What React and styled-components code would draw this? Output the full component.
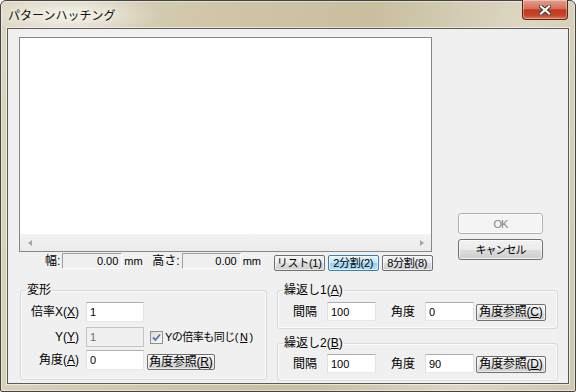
import styled, { createGlobalStyle } from 'styled-components';

const GlobalStyle = createGlobalStyle`
  html, body { margin: 0; padding: 0; background: #fff; }
  body {
    font-family: "Liberation Sans", "Noto Sans CJK JP", sans-serif;
    font-size: 12px;
    line-height: 14px;
    color: #000;
  }
  * { box-sizing: border-box; }
`;

const Window = styled.div`
  width: 576px;
  height: 392px;
  border: 1px solid #434343;
  border-radius: 6px 6px 2px 2px;
  padding: 0 6px 7px 6px;
  display: flex;
  flex-direction: column;
  background:
    radial-gradient(ellipse 90px 22px at 70px 14px, rgba(255,255,255,0.75), rgba(255,255,255,0) 100%),
    linear-gradient(100deg, #dcd5c0 0%, #cfc6a8 35%, #c8bf9f 58%, #ddd6c2 82%, #d0c8ac 100%);
  box-shadow: inset 0 0 0 1px rgba(255,255,255,0.45);
`;

const TitleBar = styled.div`
  height: 27px;
  display: flex;
  align-items: flex-start;
  justify-content: space-between;
`;

const Title = styled.div`
  padding: 6px 0 0 1px;
  font-family: "Noto Sans CJK JP", sans-serif;
  font-size: 12px;
  line-height: 15px;
  color: #111;
  text-shadow: 0 0 6px rgba(255,255,255,0.9);
`;

const CloseButton = styled.div`
  width: 46px;
  height: 20px;
  margin: -1px 1px 0 0;
  border: 1px solid #5b2418;
  border-top: none;
  border-radius: 0 0 4px 4px;
  background: linear-gradient(#e3a08e 0%, #d4705a 45%, #c2391e 52%, #c54428 80%, #d9765c 100%);
  box-shadow: inset 0 0 0 1px rgba(255,255,255,0.35);
  display: flex;
  align-items: center;
  justify-content: center;
`;

const Client = styled.div`
  height: 356px;
  border: 1px solid #5a5a5a;
  background: #f0f0f0;
  box-shadow: 0 0 0 1px rgba(255,255,255,0.55);
  padding: 8px 0 0 11px;
  display: flex;
  flex-direction: column;
`;

const TopArea = styled.div`
  display: flex;
`;

const LeftCol = styled.div`
  width: 413px;
  display: flex;
  flex-direction: column;
`;

const Preview = styled.div`
  height: 215px;
  border: 1px solid #828790;
  background: #fff;
  display: flex;
  flex-direction: column;
`;

const Canvas = styled.div`
  flex: 1;
`;

const HScroll = styled.div`
  height: 17px;
  background: linear-gradient(#f2f2f2, #ebebeb);
  display: flex;
  align-items: center;
  justify-content: space-between;
  padding: 0 7px 0 8px;
`;

const Arrow = styled.span`
  width: 0;
  height: 0;
  border-top: 3px solid transparent;
  border-bottom: 3px solid transparent;
  ${p => (p.$dir === 'left'
    ? 'border-right: 4px solid #a6a6a6;'
    : 'border-left: 4px solid #a6a6a6;')}
`;

const StatusRow = styled.div`
  margin-top: 1px;
  height: 18px;
  display: flex;
  align-items: flex-start;
  padding-left: 26px;
  & > * { flex-shrink: 0; }
`;

const StatusLabel = styled.span`
  line-height: 16px;
  white-space: nowrap;
`;

const ReadOut = styled.div`
  width: ${p => p.$w}px;
  height: 16px;
  margin-left: 2px;
  border: 1px solid;
  border-color: #a0a0a0 #fff #fff #a0a0a0;
  text-align: right;
  padding-right: 3px;
  font-size: 11px;
  line-height: 14px;
`;

const Unit = styled.span`
  width: 28px;
  margin-left: 2px;
  font-size: 11px;
  line-height: 16px;
`;

const ToolButton = styled.div`
  width: 51px;
  height: 16px;
  margin: 2px 0 0 3px;
  border: 1px solid ${p => (p.$active ? '#3c7fb1' : '#707070')};
  border-radius: 2px;
  background: ${p => (p.$active
    ? 'linear-gradient(#e5f4fc, #c4e5f6 50%, #98d1ef 51%, #b5dff5)'
    : 'linear-gradient(#f2f2f2, #ebebeb 50%, #dddddd 51%, #cfcfcf)')};
  box-shadow: inset 0 0 0 1px rgba(255,255,255,0.6);
  text-align: center;
  font-size: 11px;
  letter-spacing: -0.3px;
  line-height: 14px;
  white-space: nowrap;
  &:first-of-type { margin-left: 2px; }
`;

const SideCol = styled.div`
  margin-left: 26px;
  padding-top: 176px;
  display: flex;
  flex-direction: column;
  gap: 5px;
`;

const DialogButton = styled.div`
  width: 85px;
  height: 21px;
  border: 1px solid ${p => (p.$disabled ? '#adb2b5' : '#707070')};
  border-radius: 3px;
  background: ${p => (p.$disabled
    ? '#f4f4f4'
    : 'linear-gradient(#f2f2f2, #ebebeb 50%, #dddddd 51%, #cfcfcf)')};
  box-shadow: inset 0 0 0 1px rgba(255,255,255,0.7);
  color: ${p => (p.$disabled ? '#838383' : '#000')};
  display: flex;
  align-items: center;
  justify-content: center;
  font-size: 11px;
  letter-spacing: -1px;
`;

const BottomArea = styled.div`
  margin: 12px 0 0 1px;
  display: flex;
  gap: 10px;
  align-items: flex-start;
`;

const Group = styled.fieldset`
  margin: 0;
  width: ${p => p.$w}px;
  border: 1px solid #d5d9de;
  border-radius: 3px;
  box-shadow: inset 0 0 0 1px rgba(255,255,255,0.7);
  padding: ${p => p.$pad};
  min-width: 0;
`;

const Legend = styled.legend`
  padding: 0 1px;
  margin-left: 5px;
  line-height: 14px;
`;

const RepeatCol = styled.div`
  width: 281px;
  display: flex;
  flex-direction: column;
  gap: 7px;
`;

const Row = styled.div`
  display: flex;
  align-items: center;
  margin-top: ${p => p.$mt || 0}px;
  & > * { flex-shrink: 0; }
`;

const FormLabel = styled.span`
  width: ${p => p.$w}px;
  text-align: ${p => p.$align || 'left'};
  margin-left: ${p => p.$ml || 0}px;
  margin-right: ${p => p.$mr || 0}px;
  white-space: nowrap;
`;

const TextBox = styled.div`
  width: ${p => p.$w}px;
  height: ${p => p.$h}px;
  border: 1px solid;
  border-color: ${p => (p.$disabled ? '#c4c4c4' : '#abadb3 #e2e3ea #e3e9ef #dbdfe6')};
  background: ${p => (p.$disabled ? '#f0f0f0' : '#fff')};
  color: ${p => (p.$disabled ? '#6d6d6d' : '#000')};
  padding-left: 3px;
  font-size: 11px;
  display: flex;
  align-items: center;
`;

const RefButton = styled.div`
  width: ${p => p.$w}px;
  height: ${p => p.$h}px;
  margin-left: ${p => p.$ml}px;
  align-self: flex-end;
  border: 1px solid #707070;
  border-radius: 2px;
  background: linear-gradient(#f2f2f2, #ebebeb 50%, #dddddd 51%, #cfcfcf);
  box-shadow: inset 0 0 0 1px rgba(255,255,255,0.6);
  text-align: center;
  line-height: ${p => p.$h - 2}px;
  white-space: nowrap;
  letter-spacing: -0.2px;
`;

const Check = styled.label`
  margin-left: 6px;
  display: flex;
  align-items: center;
  gap: 2px;
  white-space: nowrap;
  font-size: 11px;
  letter-spacing: -0.5px;
`;

const CheckBox = styled.span`
  width: 13px;
  height: 13px;
  border: 1px solid #8f8f8f;
  background: linear-gradient(135deg, #dcdcdc, #fbfbfb);
  display: flex;
  align-items: center;
  justify-content: center;
`;

const Key = styled.span`
  text-decoration: underline;
  text-underline-offset: 1px;
`;

function CloseGlyph() {
  return (
    <svg width="12" height="10" viewBox="0 0 12 10">
      <path d="M2 1.5 L10 8.5 M10 1.5 L2 8.5" stroke="#3a3a3a" strokeWidth="4" strokeLinecap="square" />
      <path d="M2 1.5 L10 8.5 M10 1.5 L2 8.5" stroke="#fff" strokeWidth="2.2" strokeLinecap="square" />
    </svg>
  );
}

function CheckMark() {
  return (
    <svg width="9" height="9" viewBox="0 0 9 9">
      <path d="M1 4.5 L3.5 7 L8 1.5" fill="none" stroke="#5a73a8" strokeWidth="1.8" />
    </svg>
  );
}

export default function App() {
  return (
    <>
      <GlobalStyle />
      <Window>
        <TitleBar>
          <Title>パターンハッチング</Title>
          <CloseButton><CloseGlyph /></CloseButton>
        </TitleBar>
        <Client>
          <TopArea>
            <LeftCol>
              <Preview>
                <Canvas />
                <HScroll>
                  <Arrow $dir="left" />
                  <Arrow $dir="right" />
                </HScroll>
              </Preview>
              <StatusRow>
                <StatusLabel>幅:</StatusLabel>
                <ReadOut $w={60}>0.00</ReadOut>
                <Unit>mm</Unit>
                <StatusLabel>高さ:</StatusLabel>
                <ReadOut $w={59}>0.00</ReadOut>
                <Unit>mm</Unit>
                <ToolButton>リスト(1)</ToolButton>
                <ToolButton $active>2分割(2)</ToolButton>
                <ToolButton>8分割(8)</ToolButton>
              </StatusRow>
            </LeftCol>
            <SideCol>
              <DialogButton $disabled>OK</DialogButton>
              <DialogButton>キャンセル</DialogButton>
            </SideCol>
          </TopArea>
          <BottomArea>
            <Group $w={247} $pad="5px 0 9px 0">
              <Legend>変形</Legend>
              <Row>
                <FormLabel $w={58} $align="right" $mr={7}>倍率X(<Key>X</Key>)</FormLabel>
                <TextBox $w={58} $h={20}>1</TextBox>
              </Row>
              <Row $mt={5}>
                <FormLabel $w={58} $align="right" $mr={7}>Y(<Key>Y</Key>)</FormLabel>
                <TextBox $w={58} $h={20} $disabled>1</TextBox>
                <Check>
                  <CheckBox><CheckMark /></CheckBox>
                  Yの倍率も同じ(<Key>N</Key>)
                </Check>
              </Row>
              <Row $mt={3}>
                <FormLabel $w={58} $align="right" $mr={7}>角度(<Key>A</Key>)</FormLabel>
                <TextBox $w={58} $h={20}>0</TextBox>
                <RefButton $w={68} $h={16} $ml={3}>角度参照(<Key>R</Key>)</RefButton>
              </Row>
            </Group>
            <RepeatCol>
              <Group $w={281} $pad="5px 0 7px 0">
                <Legend>繰返し1(<Key>A</Key>)</Legend>
                <Row>
                  <FormLabel $w={34} $ml={15}>間隔</FormLabel>
                  <TextBox $w={49} $h={19}>100</TextBox>
                  <FormLabel $w={34} $ml={15}>角度</FormLabel>
                  <TextBox $w={49} $h={19}>0</TextBox>
                  <RefButton $w={70} $h={17} $ml={2}>角度参照(<Key>C</Key>)</RefButton>
                </Row>
              </Group>
              <Group $w={281} $pad="4px 0 7px 0">
                <Legend>繰返し2(<Key>B</Key>)</Legend>
                <Row>
                  <FormLabel $w={34} $ml={15}>間隔</FormLabel>
                  <TextBox $w={49} $h={19}>100</TextBox>
                  <FormLabel $w={34} $ml={15}>角度</FormLabel>
                  <TextBox $w={49} $h={19}>90</TextBox>
                  <RefButton $w={70} $h={17} $ml={2}>角度参照(<Key>D</Key>)</RefButton>
                </Row>
              </Group>
            </RepeatCol>
          </BottomArea>
        </Client>
      </Window>
    </>
  );
}
